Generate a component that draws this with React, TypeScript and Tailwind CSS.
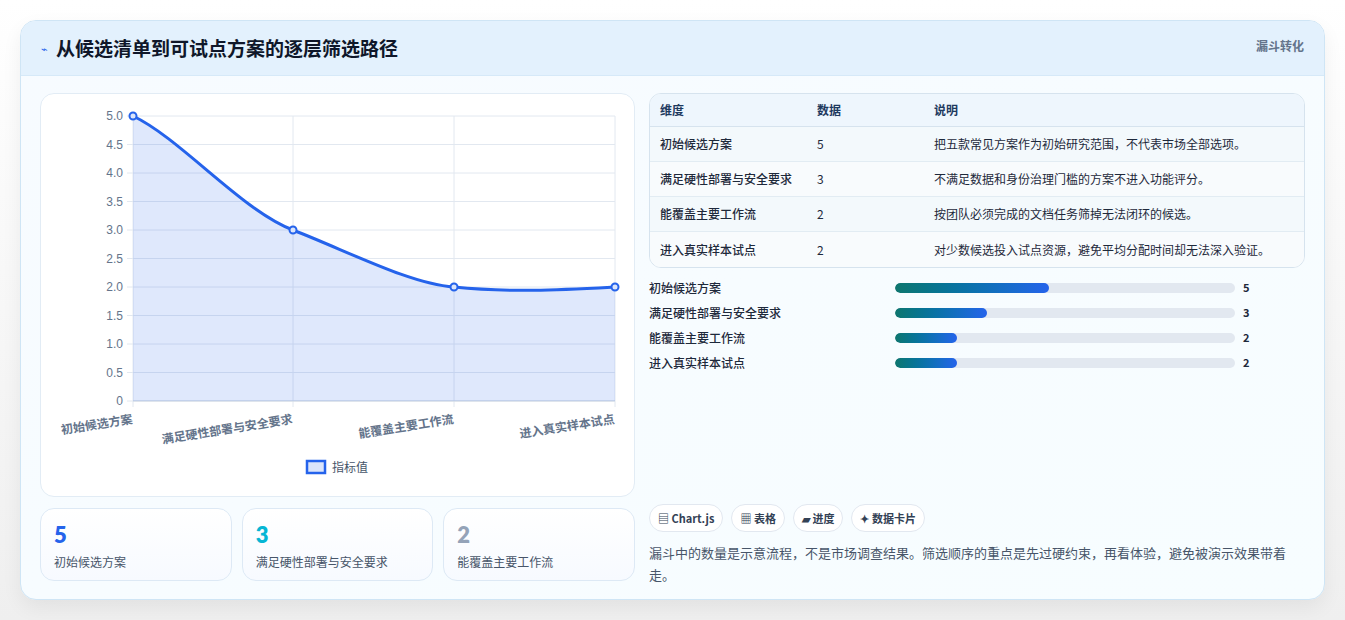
import React from "react";

const F = { fontFamily: '"Noto Sans CJK SC","Noto Sans",sans-serif' };
const rows = [
  ["初始候选方案", "5", "把五款常见方案作为初始研究范围，不代表市场全部选项。", 45.3],
  ["满足硬性部署与安全要求", "3", "不满足数据和身份治理门槛的方案不进入功能评分。", 27],
  ["能覆盖主要工作流", "2", "按团队必须完成的文档任务筛掉无法闭环的候选。", 18.2],
  ["进入真实样本试点", "2", "对少数候选投入试点资源，避免平均分配时间却无法深入验证。", 18.2],
] as const;

function Chart() {
  const x0 = 92, x1 = 574, yTop = 22, yBot = 307;
  const ticks = [5, 4.5, 4, 3.5, 3, 2.5, 2, 1.5, 1, 0.5, 0];
  const y = (v: number) => yBot - (v / 5) * (yBot - yTop);
  const xs = [92, 252, 413, 574];
  const line = `M92 ${y(5)} C140 ${y(4.6)} 200 ${y(3.35)} 252 ${y(3)} C310 ${y(2.6)} 370 ${y(2.05)} 413 ${y(2)} C470 ${y(1.9)} 520 ${y(1.95)} 574 ${y(2)}`;
  const labels = ["初始候选方案", "满足硬性部署与安全要求", "能覆盖主要工作流", "进入真实样本试点"];
  return (
    <svg width="594" height="400" style={F}>
      {ticks.map((t) => (
        <g key={t}>
          <line x1={x0 - 6} x2={x1} y1={y(t)} y2={y(t)} stroke="#e2e8f0" />
          <text x={x0 - 10} y={y(t) + 4} textAnchor="end" fontSize="12" fill="#64748b" fontFamily="Liberation Sans, sans-serif">
            {t === 0 ? "0" : t.toFixed(1)}
          </text>
        </g>
      ))}
      {xs.map((x) => (
        <line key={x} x1={x} x2={x} y1={yTop} y2={yBot + 6} stroke="#e2e8f0" />
      ))}
      <line x1={x0} x2={x1} y1={yBot} y2={yBot} stroke="#cbd5e1" />
      <path d={`${line} L574 ${yBot} L92 ${yBot} Z`} fill="rgba(37,99,235,0.15)" />
      <path d={line} fill="none" stroke="#2563eb" strokeWidth="3" />
      {[5, 3, 2, 2].map((v, i) => (
        <circle key={i} cx={xs[i]} cy={y(v)} r="3.5" fill="#dbe5fb" stroke="#2563eb" strokeWidth="2" />
      ))}
      {labels.map((l, i) => (
        <text key={l} transform={`translate(${xs[i]} ${yBot + 22}) rotate(-9)`} textAnchor="end" fontSize="12" fontWeight="600" fill="#64748b">
          {l}
        </text>
      ))}
      <rect x="266" y="367" width="18" height="12" fill="#dbe5fb" stroke="#2563eb" strokeWidth="2.5" />
      <text x="291" y="378" fontSize="12" fill="#475569">指标值</text>
    </svg>
  );
}

export default function App() {
  return (
    <div className="w-[1345px] h-[620px] bg-gradient-to-b from-white to-[#efefef] pt-[20px] px-[20px]" style={F}>
      <div className="h-[580px] rounded-[16px] border border-[#cfe5f5] bg-gradient-to-br from-[#f7fbff] to-[#f7fdff] overflow-hidden shadow-[0_8px_20px_rgba(0,0,0,0.06)]">
        <div className="h-[55px] bg-[#e3f1fd] border-b border-[#d6e9f8] flex items-center justify-between px-[20px]">
          <div className="flex items-center gap-[8px]">
            <span className="text-[#2563eb] text-[11px]">⌁</span>
            <span className="text-[19px] font-bold text-[#0f172a]">从候选清单到可试点方案的逐层筛选路径</span>
          </div>
          <span className="text-[12px] font-semibold text-[#64748b] self-start mt-[16px]">漏斗转化</span>
        </div>
        <div className="flex gap-[14px] px-[19px] pt-[17px]">
          <div className="w-[595px] flex flex-col gap-[11px]">
            <div className="h-[404px] bg-white rounded-[14px] border border-[#e2ecf5]">
              <Chart />
            </div>
            <div className="grid grid-cols-3 gap-[10px]">
              {[["5", "text-[#2563eb]", "初始候选方案"], ["3", "text-[#06b6d4]", "满足硬性部署与安全要求"], ["2", "text-[#94a3b8]", "能覆盖主要工作流"]].map(([n, c, l]) => (
                <div key={l} className="h-[73px] rounded-[14px] border border-[#dde9f5] bg-gradient-to-b from-white to-[#f7faff] px-[13px] pt-[12px]">
                  <div className={`text-[22px] font-extrabold leading-[28px] ${c}`} style={{ fontFamily: "Lato, sans-serif" }}>{n}</div>
                  <div className="text-[12px] text-[#475569] mt-[4px]">{l}</div>
                </div>
              ))}
            </div>
          </div>
          <div className="flex-1 flex flex-col">
            <div className="rounded-[12px] border border-[#d6e3ee] overflow-hidden bg-white">
              <div className="flex h-[33px] items-center bg-[#eef6fd] border-b border-[#d6e3ee] text-[12px] font-semibold text-[#1e3a5f] px-[10px]">
                <span className="w-[157px]">维度</span>
                <span className="w-[117px]">数据</span>
                <span>说明</span>
              </div>
              {rows.map((r, i) => (
                <div key={i} className={`flex h-[35px] items-center text-[12px] text-[#1e293b] px-[10px] ${i % 2 ? "bg-[#f8fbfd]" : "bg-[#f3f9fc]"} ${i < 3 ? "border-b border-[#e2ecf3]" : ""}`}>
                  <span className="w-[157px] font-medium">{r[0]}</span>
                  <span className="w-[117px]">{r[1]}</span>
                  <span>{r[2]}</span>
                </div>
              ))}
            </div>
            <div className="flex flex-col gap-[8px] mt-[11px]">
              {rows.map((r, i) => (
                <div key={i} className="flex items-center h-[17px] text-[12px] text-[#1e293b]">
                  <span className="w-[246px] font-medium">{r[0]}</span>
                  <div className="w-[340px] h-[10px] rounded-full bg-[#e2e8f0] overflow-hidden">
                    <div className="h-full rounded-full bg-gradient-to-r from-[#0f766e] to-[#2563eb]" style={{ width: `${r[3]}%` }} />
                  </div>
                  <span className="ml-[8px] font-bold text-[11px]">{r[1]}</span>
                </div>
              ))}
            </div>
            <div className="flex gap-[8px] mt-[133px]">
              {["▤ Chart.js", "▦ 表格", "▰ 进度", "✦ 数据卡片"].map((p) => (
                <span key={p} className="h-[28px] px-[8px] rounded-full border border-[#e2e8f0] bg-white text-[11px] font-semibold text-[#334155] flex items-center">{p}</span>
              ))}
            </div>
            <p className="mt-[10px] text-[13px] leading-[22px] text-[#475569] w-[640px]">
              漏斗中的数量是示意流程，不是市场调查结果。筛选顺序的重点是先过硬约束，再看体验，避免被演示效果带着走。
            </p>
          </div>
        </div>
      </div>
    </div>
  );
}
